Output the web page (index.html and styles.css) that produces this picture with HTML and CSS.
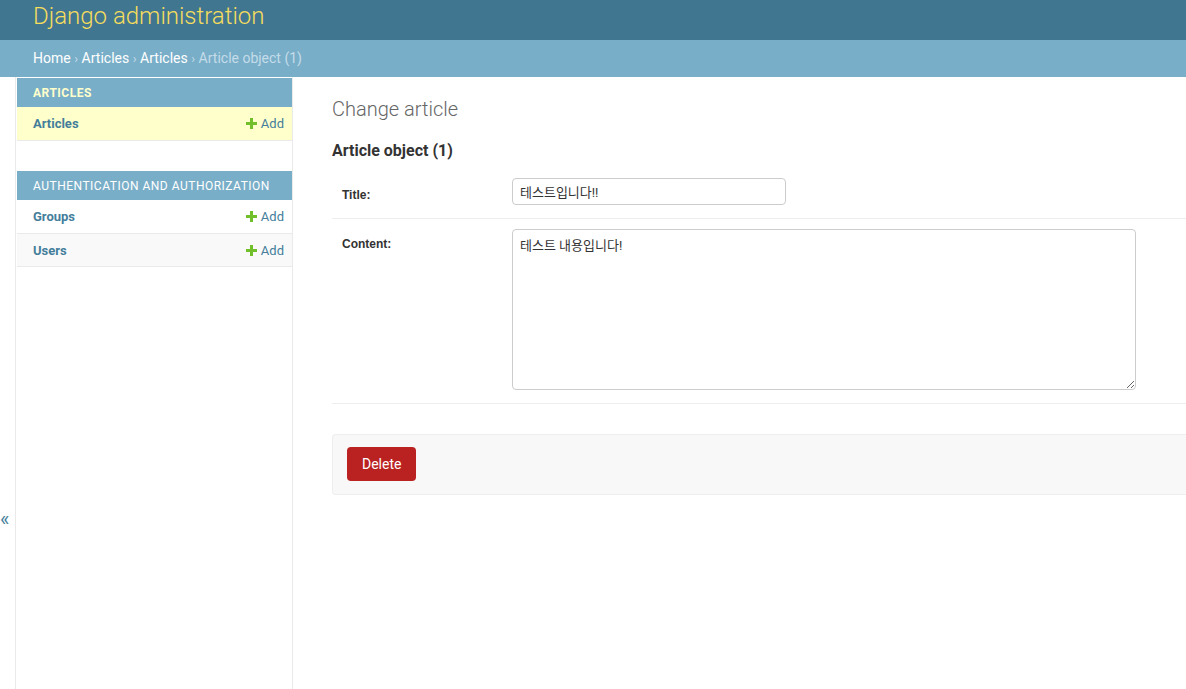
FILE: index.html
```html
<!DOCTYPE html>
<html lang="ko">
<head>
<meta charset="utf-8">
<title>Change article | Django site admin</title>
<link rel="stylesheet" href="styles.css">
</head>
<body>
<header class="header">
  <h1 class="branding">Django administration</h1>
</header>
<nav class="breadcrumbs">
  <a href="#">Home</a><span class="sep">›</span><a href="#">Articles</a><span class="sep">›</span><a href="#">Articles</a><span class="sep">›</span><span class="current">Article object (1)</span>
</nav>
<div class="main">
  <div class="toggle"><span class="toggle-glyph">«</span></div>
  <aside class="sidebar">
    <div class="module current-app">
      <div class="caption">Articles</div>
      <div class="row current-model">
        <a class="model" href="#">Articles</a>
        <a class="add" href="#"><svg class="plus" width="11" height="11" viewBox="0 0 11 11"><path d="M4 0h3v4h4v3H7v4H4V7H0V4h4z" fill="#70bf2b"/></svg>Add</a>
      </div>
    </div>
    <div class="module">
      <div class="caption">Authentication and Authorization</div>
      <div class="row">
        <a class="model" href="#">Groups</a>
        <a class="add" href="#"><svg class="plus" width="11" height="11" viewBox="0 0 11 11"><path d="M4 0h3v4h4v3H7v4H4V7H0V4h4z" fill="#70bf2b"/></svg>Add</a>
      </div>
      <div class="row alt">
        <a class="model" href="#">Users</a>
        <a class="add" href="#"><svg class="plus" width="11" height="11" viewBox="0 0 11 11"><path d="M4 0h3v4h4v3H7v4H4V7H0V4h4z" fill="#70bf2b"/></svg>Add</a>
      </div>
    </div>
  </aside>
  <main class="content">
    <h1 class="title">Change article</h1>
    <h2 class="subtitle">Article object (1)</h2>
    <div class="fieldset">
      <div class="form-row">
        <label class="label">Title:</label>
        <input class="text-input" type="text" value="테스트입니다!!">
      </div>
      <div class="form-row">
        <label class="label">Content:</label>
        <textarea class="textarea">테스트 내용입니다!</textarea>
      </div>
    </div>
    <div class="submit-row">
      <a class="deletelink" href="#">Delete</a>
    </div>
  </main>
</div>
</body>
</html>
```
FILE: styles.css
```css
* { box-sizing: border-box; }
html, body { margin: 0; padding: 0; }
body {
  font-family: Roboto, "Noto Sans CJK KR", "Liberation Sans", sans-serif;
  font-size: 14px;
  color: #333;
  background: #fff;
  height: 689px;
  overflow: hidden;
  display: flex;
  flex-direction: column;
}
a { text-decoration: none; }

.header {
  height: 40px;
  background: #417690;
  padding: 0 33px;
  display: flex;
  align-items: flex-start;
}
.branding {
  margin: 0;
  font-size: 24px;
  font-weight: 300;
  line-height: 32px;
  color: #f5dd5d;
}

.breadcrumbs {
  height: 37px;
  background: #79aec8;
  padding: 0 33px;
  display: flex;
  align-items: center;
  font-size: 14px;
  color: #c4dce8;
  padding-bottom: 1px;
}
.breadcrumbs a { color: #fff; }
.breadcrumbs .sep { margin: 0 3.5px; font-size: 13px; color: #c4dce8; }
.breadcrumbs .current { color: #c4dce8; }

.main {
  flex: 1;
  display: flex;
  min-height: 0;
}
.toggle {
  flex: 0 0 16px;
  border-right: 1px solid #eaeaea;
  padding-top: 432px;
  padding-left: 0;
}
.toggle-glyph {
  display: block;
  font-size: 20px;
  line-height: 20px;
  color: #447e9b;
}

.sidebar {
  flex: 0 0 277px;
  border-right: 1px solid #eaeaea;
  padding: 1px 0 0 1px;
}
.module { margin-bottom: 30px; }
.caption {
  height: 29px;
  background: #79aec8;
  color: #fff;
  font-size: 12px;
  letter-spacing: 0.5px;
  text-transform: uppercase;
  padding: 0 16px;
  display: flex;
  align-items: center;
}
.current-app .caption { color: #ffc; font-weight: 700; }
.row {
  height: 34px;
  border-bottom: 1px solid #eaeaea;
  display: flex;
  align-items: center;
  justify-content: space-between;
  padding: 0 8px 0 16px;
  font-size: 13px;
}
.row.alt { background: #f9f9f9; height: 33px; }
.row.current-model { background: #ffc; }
.model { color: #447e9b; font-weight: 700; }
.add { color: #447e9b; display: flex; align-items: center; }
.plus { margin-right: 4px; }

.content {
  flex: 1;
  padding: 20px 0 0 39px;
  min-width: 0;
}
.title {
  margin: 0;
  font-size: 20px;
  font-weight: 300;
  color: #666;
  line-height: 24px;
  padding-top: 0;
}
.subtitle {
  margin: 20px 0 0;
  font-size: 16px;
  font-weight: 700;
  color: #333;
  line-height: 20px;
}
.fieldset { margin-top: 7px; }
.form-row {
  display: flex;
  align-items: flex-start;
  padding: 10px 10px 13px;
  border-bottom: 1px solid #eee;
}
.label {
  flex: 0 0 170px;
  font-weight: 700;
  font-size: 12px;
  color: #333;
  padding-top: 10px;
  font-family: "Liberation Sans", Roboto, sans-serif;
}
.form-row:nth-child(2) .label { padding-top: 8px; }
.text-input {
  width: 274px;
  height: 27px;
  border: 1px solid #ccc;
  border-radius: 4px;
  padding: 2px 7px;
  font-size: 13px;
  font-family: Roboto, "Noto Sans CJK KR", sans-serif;
  color: #333;
  display: block;
}
.textarea {
  width: 624px;
  height: 161px;
  border: 1px solid #ccc;
  border-radius: 4px;
  padding: 5px 7px;
  font-size: 13px;
  font-family: Roboto, "Noto Sans CJK KR", sans-serif;
  color: #333;
  display: block;
  resize: both;
}
.submit-row {
  margin-top: 30px;
  padding: 12px 14px 13px;
  background: #f8f8f8;
  border: 1px solid #eee;
  border-right: none;
  border-radius: 4px 0 0 4px;
}
.deletelink {
  display: inline-block;
  vertical-align: top;
  background: #ba2121;
  color: #fff;
  border-radius: 4px;
  height: 34px;
  line-height: 34px;
  padding: 0 15px;
  font-size: 14px;
}
```
